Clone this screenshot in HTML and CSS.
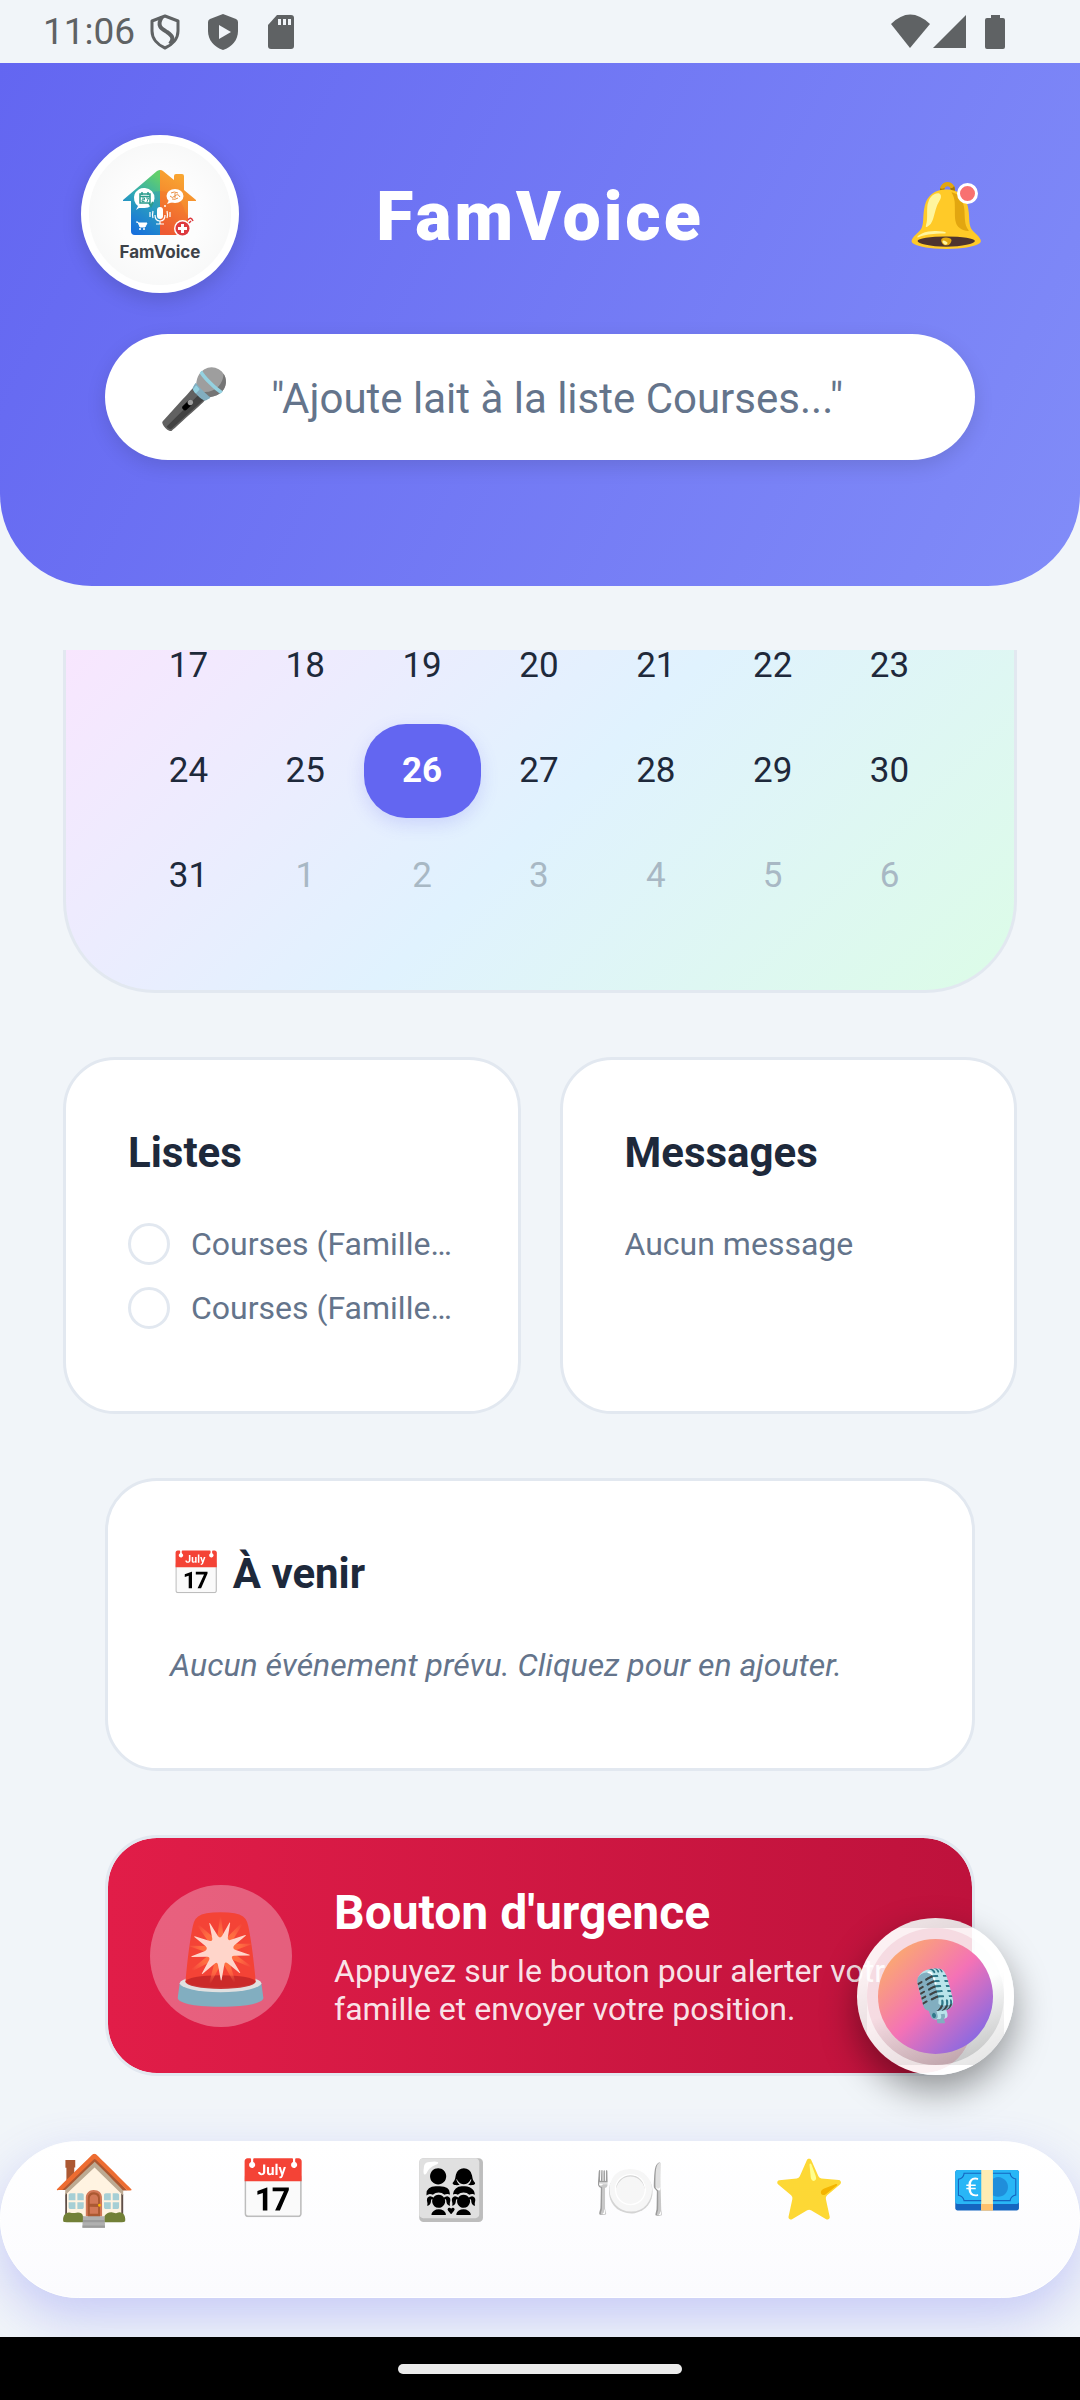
FILE: index.html
```html
<!DOCTYPE html>
<html lang="fr">
<head>
<meta charset="utf-8">
<meta name="viewport" content="width=device-width, initial-scale=1">
<title>FamVoice</title>
<link rel="stylesheet" href="styles.css">
</head>
<body>

<div class="status-bar">
	<span class="clock">11:06</span>
	<svg class="st-icon" width="30" height="36" viewBox="0 0 30 36">
		<path d="M15 2 L28 7 V17 C28 25 22 31 15 34 C8 31 2 25 2 17 V7 Z" fill="none" stroke="#5f6264" stroke-width="3" stroke-linejoin="round"/>
		<path d="M12 3 C6 12 12 15 17 18 C23 22 24 25 20 30" fill="none" stroke="#5f6264" stroke-width="4"/>
	</svg>
	<svg class="st-icon" width="30" height="38" viewBox="0 0 30 38">
		<path d="M15 1 L28 6 Q30 7 30 9 V18 C30 27 24 34 15 37 C6 34 0 27 0 18 V9 Q0 7 2 6 Z" fill="#5f6264"/>
		<path d="M11 12 L23 19 L11 26 Z" fill="#f1f5f9"/>
	</svg>
	<svg class="st-icon" width="28" height="34" viewBox="-2 0 28 34">
		<path d="M9 0 H23 Q26 0 26 3 V31 Q26 34 23 34 H3 Q0 34 0 31 V10 Z" fill="#5f6264"/>
		<path d="M10 4h3v6h-3zM15 4h3v6h-3zM20 4h3v6h-3z" fill="#f1f5f9"/>
	</svg>
	<svg class="st-wifi" width="114" height="36" viewBox="0 0 114 36">
		<path d="M0 10 Q19 -9 39 10 L19 34 Z" fill="#5f6264"/>
		<path d="M42 34 L75 1 V34 Z" fill="#5f6264"/>
		<path d="M94 6 Q94 4 96 4 H100 V1 H109 V4 H112 Q114 4 114 6 V33 Q114 35 112 35 H96 Q94 35 94 33 Z" fill="#5f6264"/>
	</svg>
</div>

<header class="header">
	<div class="header-row">
		<div class="logo">
			<svg viewBox="19 23 142 142" role="img" aria-label="FamVoice">
				<defs>
					<linearGradient id="houseL" x1="0.7" y1="0" x2="0.3" y2="1">
						<stop offset="0" stop-color="#62cf6c"/>
						<stop offset="0.45" stop-color="#2fa9b5"/>
						<stop offset="1" stop-color="#1569dd"/>
					</linearGradient>
					<linearGradient id="houseR" x1="0.6" y1="0" x2="0.3" y2="1">
						<stop offset="0" stop-color="#f9ab33"/>
						<stop offset="0.5" stop-color="#f58a2e"/>
						<stop offset="1" stop-color="#ee5a34"/>
					</linearGradient>
				</defs>
				<path d="M90 50 Q89 50 87 51 L53 80 V81 H61 V111 Q61 115 65 115 H90 Z" fill="url(#houseL)"/>
				<path d="M90 50 Q92 50 93 51 L104 60 V56 Q104 54 106 54 H112 Q114 54 114 56 V70 L126 80 V81 H118 V115 H90 Z" fill="url(#houseR)"/>
				<path d="M90 71 Q70 72 64 92 L61 96 V111 Q61 115 65 115 H90 Z" fill="#1d7be0" opacity="0.25"/>
				<path d="M90 71 Q110 72 115 92 L118 96 V115 H90 Z" fill="#ef5b30" opacity="0.25"/>
				<path d="M75 68 a10 10 0 1 1 -1 20 Q71 88 69 88 L66 90 L68 86 A10 10 0 0 1 75 68 Z" fill="#fff"/>
				<path d="M70 74 h10 v9 h-10 z M70 76.500 h10 M72 72 v3 M78 72 v3" fill="none" stroke="#2b9c8c" stroke-width="1.500"/>
				<path d="M72 78 h2.500 v1.800 h-2.500 v1.800 h2.500 M76 78 h2.500 l-1.500 3.800" fill="none" stroke="#2b9c8c" stroke-width="1"/>
				<path d="M79 83 l2 3 l2 -4" fill="none" stroke="#2b9c8c" stroke-width="2"/>
				<ellipse cx="105" cy="76" rx="8.500" ry="7" fill="#fff"/>
				<path d="M99 80 l-2 4 l6 -2 z" fill="#fff"/>
				<path d="M101 73 q3 -2 7 0 M100 76 q2 3 5 0 t5 1 M102 79 q3 1 6 -1 M105 73 v5" fill="none" stroke="#e98f43" stroke-width="1"/>
				<circle cx="95" cy="86" r="1" fill="#fff"/>
				<rect x="87" y="87" width="6" height="12" rx="3" fill="#fff"/>
				<path d="M85 95 q0 6 5 6 t5 -6 M90 101 v3 M86 104 h8 M83 91 q-1 4 0 7 M80 92 v5 M97 91 q1 4 0 7 M100 92 v5" fill="none" stroke="#fff" stroke-width="1.200"/>
				<path d="M66 102 h2 l2 5 h5 l2 -4 h-8" fill="#fff" stroke="#fff" stroke-width="1"/>
				<circle cx="70" cy="109" r="1" fill="#fff"/><circle cx="74" cy="109" r="1" fill="#fff"/>
				<circle cx="112.500" cy="108.500" r="8.500" fill="#fff"/>
				<circle cx="112.500" cy="108.500" r="7" fill="#dd3a3f"/>
				<path d="M111 104 h3 v3 h3 v3 h-3 v3 h-3 v-3 h-3 v-3 h3 z" fill="#fff"/>
				<path d="M118 100 q3 -4 5 1 M119 103 l2 -2" fill="none" stroke="#dd3a3f" stroke-width="1.500"/>
				<text class="logo-text" x="90" y="138" text-anchor="middle">FamVoice</text>
			</svg>
		</div>
		<h1>FamVoice</h1>
		<button class="bell" type="button" aria-label="Notifications">🔔<span class="bell-dot"></span></button>
	</div>
	<label class="search">
		<span class="search-mic">🎤</span>
		<input type="text" aria-label="Commande vocale" placeholder="&quot;Ajoute lait à la liste Courses...&quot;">
	</label>
</header>

<main class="content">
	<section class="calendar">
		<table>
			<tr class="first"><td>17</td><td>18</td><td>19</td><td>20</td><td>21</td><td>22</td><td>23</td></tr>
			<tr><td>24</td><td>25</td><td><button class="today" type="button">26</button></td><td>27</td><td>28</td><td>29</td><td>30</td></tr>
			<tr><td>31</td><td class="out">1</td><td class="out">2</td><td class="out">3</td><td class="out">4</td><td class="out">5</td><td class="out">6</td></tr>
		</table>
	</section>

	<div class="card-row">
		<section class="card">
			<h2>Listes</h2>
			<label class="item"><input type="checkbox"><span>Courses (Famille…</span></label>
			<label class="item"><input type="checkbox"><span>Courses (Famille…</span></label>
		</section>
		<section class="card">
			<h2>Messages</h2>
			<p class="item">Aucun message</p>
		</section>
	</div>

	<section class="card inset">
		<h2>📅 À venir</h2>
		<p class="item empty">Aucun événement prévu. Cliquez pour en ajouter.</p>
	</section>

	<section class="urgence inset">
		<span class="urgence-icon">🚨</span>
		<div class="urgence-text">
			<h2>Bouton d'urgence</h2>
			<p>Appuyez sur le bouton pour alerter votre famille et envoyer votre position.</p>
		</div>
		<button class="fab" type="button" aria-label="Parler"><span class="fab-inner">🎙️</span></button>
	</section>
</main>

<nav class="tabs">
	<a href="#accueil" class="active" aria-label="Accueil">🏠</a>
	<a href="#calendrier" aria-label="Calendrier">📅</a>
	<a href="#famille" aria-label="Famille">👨‍👩‍👧‍👧</a>
	<a href="#repas" aria-label="Repas">🍽️</a>
	<a href="#favoris" aria-label="Favoris">⭐</a>
	<a href="#budget" aria-label="Budget">💶</a>
</nav>

<div class="gesture-bar"><span></span></div>

</body>
</html>
```

FILE: styles.css
```css
*{
	box-sizing:border-box;
}
body{
	margin:0;
	min-height:100vh;
	display:flex;
	flex-direction:column;
	background:#f1f5f9;
	font-family:Roboto, "Noto Color Emoji", sans-serif;
	color:#1e293b;
}
h1, h2, p{
	margin:0;
}
button{
	border:0;
	padding:0;
	font-family:inherit;
	cursor:pointer;
}

/* status bar */
.status-bar{
	display:flex;
	align-items:center;
	height:63px;
	padding:0 75px 0 43px;
	color:#5f6264;
}
.clock{
	font-size:37px;
	margin-right:15px;
}
.st-icon{
	margin-right:28px;
}
.st-wifi{
	margin-left:auto;
}

/* header */
.header{
	padding:72px 81px 126px;
	border-radius:0 0 92px 92px;
	background:linear-gradient(116deg, #6366f1, #818cf8);
}
.header-row{
	display:grid;
	grid-template-columns:158px 1fr 158px;
	align-items:center;
	margin-bottom:41px;
}
.logo{
	width:158px;
	height:158px;
	border:8px solid #fff;
	border-radius:50%;
	background:radial-gradient(#fdfdfd 40%, #f4f5f5);
	box-shadow:0 6px 20px rgba(0,0,0,0.15);
}
.logo svg{
	display:block;
}
.logo-text{
	font-family:Inter, sans-serif;
	font-size:17px;
	font-weight:700;
	fill:#3d4248;
}
.header h1{
	padding-top:6px;
	font-size:68px;
	line-height:80px;
	font-weight:900;
	letter-spacing:3px;
	text-align:center;
	color:#fff;
}
.bell{
	position:relative;
	justify-self:end;
	width:106px;
	height:106px;
	padding:4px 0 0 2px;
	background:none;
	font-size:63px;
	line-height:80px;
}
.bell-dot{
	position:absolute;
	top:22px;
	right:21px;
	width:21px;
	height:21px;
	border:3px solid #fff;
	border-radius:50%;
	background:#f87171;
}
.search{
	display:flex;
	align-items:center;
	height:126px;
	margin:0 24px;
	padding:0 53px;
	border-radius:63px;
	background:#fff;
	box-shadow:0 6px 20px rgba(0,0,0,0.12);
}
.search-mic{
	width:72px;
	margin-right:41px;
	padding-top:4px;
	font-size:58px;
}
.search input{
	flex:1;
	min-width:0;
	padding:2px 0 0;
	border:0;
	outline:0;
	background:none;
	font-family:inherit;
	font-size:42px;
	color:#1e293b;
}
.search input::placeholder{
	color:#64748b;
	opacity:1;
}

/* content */
.content{
	flex:1;
	display:flex;
	flex-direction:column;
	gap:64px;
	padding:64px 63px 65px;
}
.calendar{
	padding:0 66px 62px 64px;
	border:3px solid #e2e8f0;
	border-top:0;
	border-radius:0 0 92px 92px;
	background:linear-gradient(135deg, #f8e6fe, #e0f2fe 50%, #dcfce7);
}
.calendar table{
	width:100%;
	table-layout:fixed;
	border-collapse:collapse;
}
.calendar td{
	height:105px;
	padding:0;
	font-size:35px;
	line-height:32px;
	text-align:center;
}
.calendar .first td{
	height:68px;
	padding-bottom:36px;
}
.calendar .out{
	color:#a8b8c4;
}
.today{
	width:100%;
	height:94px;
	border-radius:42px;
	background:#6366f1;
	box-shadow:0 6px 18px rgba(99,102,241,0.2);
	font-size:35px;
	font-weight:700;
	color:#fff;
}
.card-row{
	display:grid;
	grid-template-columns:1fr 1fr;
	gap:39px;
}
.card{
	padding:62px 62px 60px;
	border:3px solid #e2e8f0;
	border-radius:52px;
	background:#fff;
}
.inset{
	margin:0 42px;
}
.card h2{
	margin-bottom:39px;
	font-size:42px;
	line-height:62px;
}
.item{
	display:flex;
	align-items:center;
	gap:21px;
	height:42px;
	margin-bottom:22px;
	font-size:32px;
	white-space:nowrap;
	color:#64748b;
}
.item input{
	appearance:none;
	flex:none;
	width:42px;
	height:42px;
	margin:0;
	border:3px solid #e2e8f0;
	border-radius:50%;
}
.empty{
	font-style:italic;
}

/* emergency button */
.urgence{
	position:relative;
	display:flex;
	align-items:center;
	gap:42px;
	height:241px;
	padding:0 42px;
	border:3px solid #e2e8f0;
	border-radius:52px;
	background:linear-gradient(90deg, #e11d48, #be123c) padding-box;
	color:#fff;
}
.urgence-icon{
	flex:none;
	width:142px;
	height:142px;
	border-radius:50%;
	background:rgba(255,255,255,0.3);
	font-size:86px;
	line-height:150px;
	text-align:center;
}
.urgence h2{
	margin-bottom:10px;
	font-size:48px;
	line-height:58px;
}
.urgence p{
	font-size:32px;
	line-height:38px;
	color:rgba(255,255,255,0.9);
}
.fab{
	position:absolute;
	right:-42px;
	bottom:-2px;
	width:157px;
	height:157px;
	padding:11px;
	border:10px solid rgba(255,255,255,0.6);
	border-radius:50%;
	background:linear-gradient(160deg, rgba(255,255,255,0.85) 50%, rgba(175,175,175,0.85));
	box-shadow:0 16px 36px rgba(0,0,0,0.4);
}
.fab-inner{
	display:block;
	width:115px;
	height:115px;
	border-radius:50%;
	background:linear-gradient(135deg, #fdba5a, #f472b6 50%, #6366f1);
	font-size:50px;
	line-height:115px;
}

/* bottom tabs */
.tabs{
	display:grid;
	grid-template-columns:repeat(6, 1fr);
	height:157px;
	margin-bottom:39px;
	padding:10px 2px 10px 4px;
	border:1px solid #fff;
	border-radius:79px;
	background:linear-gradient(#fff, #fbfbfe);
	box-shadow:0 20px 50px rgba(99,102,241,0.3);
}
.tabs a{
	font-size:58px;
	line-height:76px;
	text-align:center;
	text-decoration:none;
}
.tabs .active{
	font-size:68px;
}

.gesture-bar{
	position:relative;
	display:flex;
	align-items:center;
	justify-content:center;
	height:63px;
	background:#000;
}
.gesture-bar span{
	width:284px;
	height:10px;
	border-radius:5px;
	background:#ebebeb;
}
```
